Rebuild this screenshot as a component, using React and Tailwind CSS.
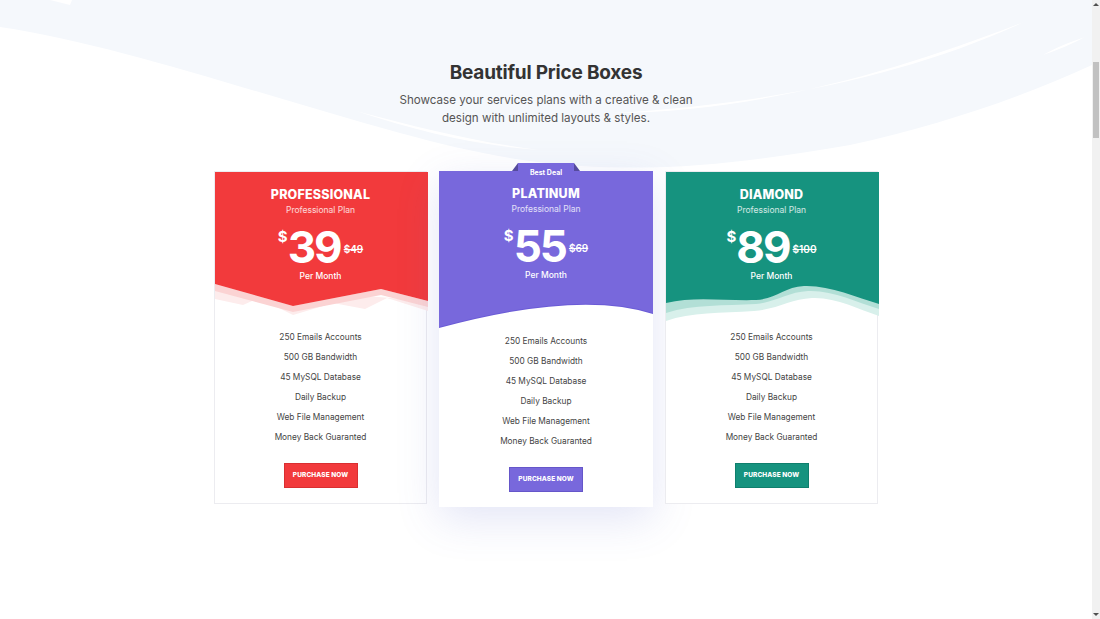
import React from "react";

const FONT = { fontFamily: "Inter, 'Open Sans', 'Liberation Sans', sans-serif" };

const features = [
  "250 Emails Accounts",
  "500 GB Bandwidth",
  "45 MySQL Database",
  "Daily Backup",
  "Web File Management",
  "Money Back Guaranted",
];

function RedShape() {
  return (
    <svg className="absolute inset-0" width="213" height="150" viewBox="0 0 213 150">
      <polygon fill="#fdecec" points="0,112 0,127 28,133 44,126 78,143 118,131 150,137 172,126 213,139 213,129" />
      <polygon fill="#fbd3d3" points="0,112 0,119 78,140 166,123 213,135 213,129 166,117 78,134" />
      <polygon fill="#f23a3c" points="0,0 213,0 213,129 166,117 78,134 0,112" />
    </svg>
  );
}

function PurpleShape() {
  return (
    <svg className="absolute inset-0" width="214" height="160" viewBox="0 0 214 160">
      <path fill="#6a5bd6" d="M0,0 H214 V143 Q140,119 0,157 Z" />
      <path fill="#7868dc" d="M0,0 H214 V142 Q140,118 0,156 Z" />
    </svg>
  );
}

function TealShape() {
  return (
    <svg className="absolute inset-0" width="213" height="152" viewBox="0 0 213 152">
      <path fill="#d8f0eb" d="M0,149 C25,140 55,141 88,139 C112,137 125,127 146,126 C170,125 192,137 213,144 V0 H0 Z" />
      <path fill="#b2dfd6" d="M0,141 C28,132 58,134 90,132 C110,130 122,120 142,119 C167,118 190,130 213,137 V0 H0 Z" />
      <path fill="#16937f" d="M0,131 C28,124 58,129 90,128 C110,127 118,115 138,114 C163,113 190,125 213,132 V0 H0 Z" />
    </svg>
  );
}

function Card({ name, price, old, color, border, shape, headerH, featured }) {
  return (
    <div
      className={
        "relative flex flex-col bg-white " +
        (featured
          ? "w-[214px] shadow-[0_12px_40px_rgba(90,100,200,0.17)]"
          : "w-[213px] border border-[#ececf0]")
      }
    >
      {featured && (
        <div className="absolute left-[73px] top-[-8px] z-10 h-[20px] w-[68px]">
          <svg className="absolute left-0 top-0" width="68" height="8" viewBox="0 0 68 8">
            <polygon fill="#554a9e" points="0,8 6,0 6,8" />
            <rect x="6" y="0" width="56" height="8" fill="#7868dc" />
            <polygon fill="#554a9e" points="62,0 68,8 62,8" />
          </svg>
          <div className="relative pt-[6px] text-center text-[7px] font-bold leading-[8px] text-white">Best Deal</div>
        </div>
      )}
      <div className={"relative " + headerH}>
        {shape}
        <div className="relative flex flex-col items-center pt-[15px] text-white">
          <div className="text-[12.5px] font-extrabold leading-[16px] tracking-[0.2px]">{name}</div>
          <div className="text-[8.5px] leading-[14px] text-white/80">Professional Plan</div>
          <div className="mt-[10px] flex h-[40px] items-start">
            <span className="mt-[2px] text-[15px] font-bold leading-[15px]">$</span>
            <span className="text-[44px] font-bold leading-[40px] tracking-[-2px]">{price}</span>
            <span className="ml-[3px] mt-[17px] text-[10px] font-semibold leading-[10px] line-through">{old}</span>
          </div>
          <div className="mt-[2px] text-[8.5px] font-medium leading-[14px]">Per Month</div>
        </div>
      </div>
      <div className="flex flex-col items-center pt-[5px]">
        {features.map((f) => (
          <div key={f} className="text-[8.3px] leading-[20px] text-[#444]">{f}</div>
        ))}
        <div
          className={
            "mb-[15px] mt-[16px] flex h-[25px] w-[74px] items-center justify-center border text-[6.5px] font-extrabold tracking-[0.1px] text-white " +
            color + " " + border
          }
        >
          PURCHASE NOW
        </div>
      </div>
    </div>
  );
}

export default function App() {
  return (
    <div className="flex h-[619px] w-full overflow-hidden bg-white" style={FONT}>
      <div className="relative flex-1 overflow-hidden">
        <svg className="absolute left-0 top-0" width="1092" height="200" viewBox="0 0 1092 200">
          <rect x="0" y="0" width="1092" height="200" fill="#f5f8fc" />
          <path
            fill="#ffffff"
            d="M0,27 C120,45 260,95 400,133 C470,152 520,162 580,166 C680,172 760,160 850,145 C940,125 1020,98 1092,65 L1092,200 L0,200 Z"
          />
          <path fill="#ffffff" d="M612,113 C760,112 900,70 1024,22 C910,75 770,104 612,113 Z" />
          <path fill="#ffffff" d="M1043,55 C1055,48 1070,42 1085,37 C1072,44 1058,50 1043,55 Z" />
          <path fill="#ffffff" d="M356,111 C420,128 480,143 540,150 C480,146 420,132 356,111 Z" />
          <path fill="#ffffff" d="M50,0 L72,0 L70,5 Z" />
        </svg>
        <div className="relative flex flex-col items-center pt-[61px]">
          <h1 className="text-[19px] font-bold leading-[24px] tracking-[-0.2px] text-[#333]">Beautiful Price Boxes</h1>
          <p className="mt-[6px] text-center text-[11.6px] leading-[18px] text-[#555]">
            Showcase your services plans with a creative &amp; clean
            <br />
            design with unlimited layouts &amp; styles.
          </p>
          <div className="mt-[44px] flex items-start gap-[12px]">
            <Card
              name="PROFESSIONAL"
              price="39"
              old="$49"
              color="bg-[#f23a3c]"
              border="border-[#d92f31]"
              shape={<RedShape />}
              headerH="h-[150px]"
            />
            <Card
              name="PLATINUM"
              price="55"
              old="$69"
              color="bg-[#7868dc]"
              border="border-[#6556c9]"
              shape={<PurpleShape />}
              headerH="h-[155px]"
              featured
            />
            <Card
              name="DIAMOND"
              price="89"
              old="$100"
              color="bg-[#16937f]"
              border="border-[#0f7f6d]"
              shape={<TealShape />}
              headerH="h-[150px]"
            />
          </div>
        </div>
      </div>
      <div className="flex w-[8px] flex-col items-center bg-[#f1f1f1]">
        <div className="mt-[3px] h-0 w-0 border-x-[3px] border-b-[3px] border-x-transparent border-b-[#505050]" />
        <div className="mt-[56px] h-[76px] w-[6px] bg-[#c1c1c1]" />
        <div className="flex-1" />
        <div className="mb-[3px] h-0 w-0 border-x-[3px] border-t-[3px] border-x-transparent border-t-[#505050]" />
      </div>
    </div>
  );
}
